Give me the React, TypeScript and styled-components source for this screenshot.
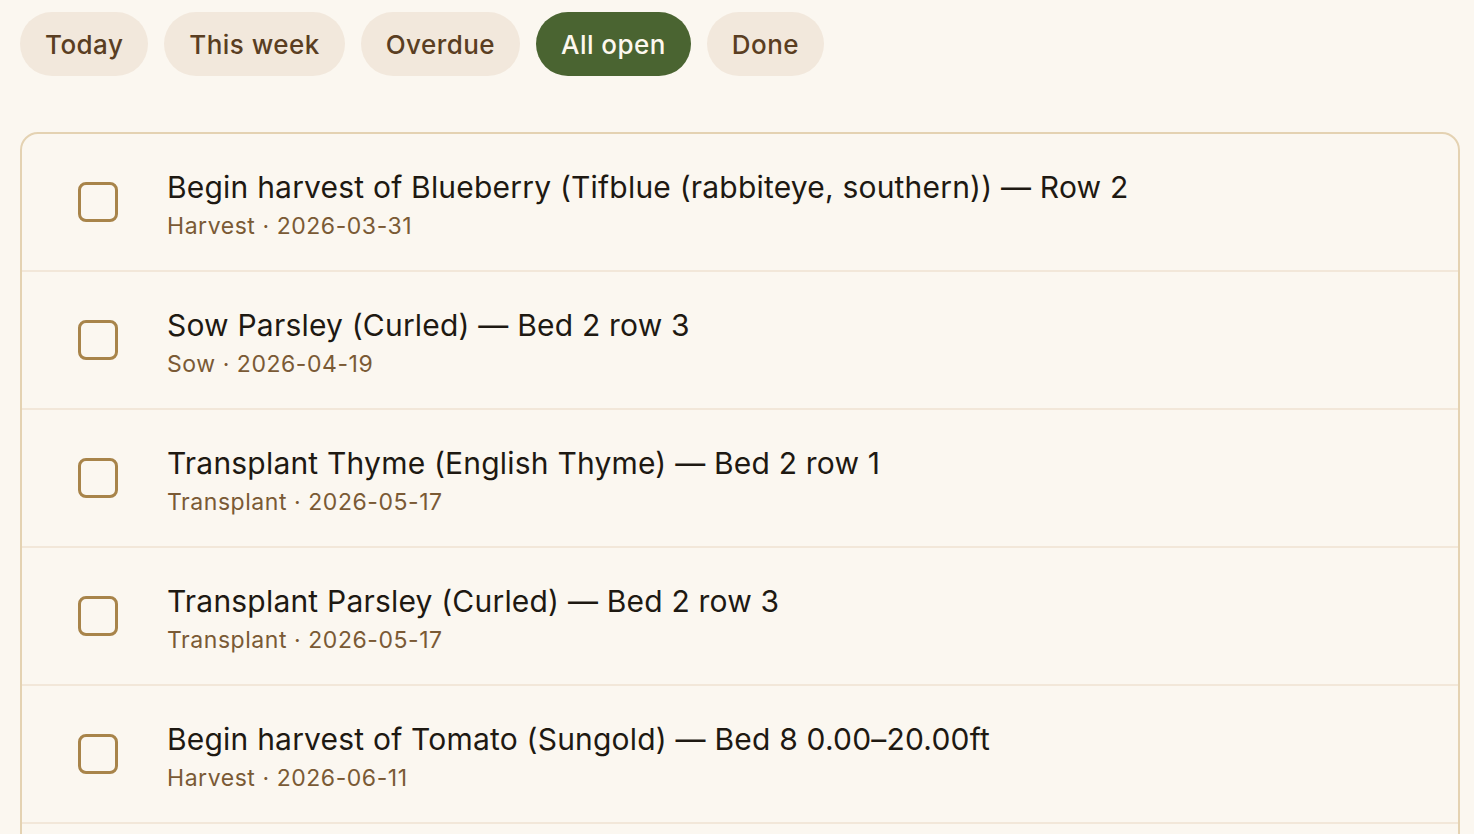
import React from "react";
import styled, { createGlobalStyle } from "styled-components";

const Global = createGlobalStyle`
  html, body { margin: 0; padding: 0; background: #FBF7F0; }
  body { font-family: Inter, "Noto Sans", sans-serif; -webkit-font-smoothing: antialiased; }
`;

const Page = styled.div`
  padding: 12px 14px 0 20px;
  display: flex;
  flex-direction: column;
  gap: 56px;
`;

const ChipBar = styled.div`
  display: flex;
  gap: 16px;
`;

const Chip = styled.button<{ $active?: boolean }>`
  height: 64px;
  padding: 0 25px;
  border: none;
  border-radius: 32px;
  font-family: inherit;
  font-size: 26px;
  letter-spacing: 0.45px;
  font-weight: 500;
  background: ${(p) => (p.$active ? "#4A6431" : "#F2E8DC")};
  color: ${(p) => (p.$active ? "#FDF8EE" : "#5A3E22")};
  cursor: pointer;
`;

const Card = styled.div`
  border: 2px solid #E4D2B2;
  border-radius: 18px;
  background: #FBF7F0;
  overflow: hidden;
`;

const Row = styled.div`
  height: 136px;
  display: flex;
  align-items: center;
  padding-left: 56px;
  gap: 49px;
  border-bottom: 2px solid #F2E7D9;
`;

const Check = styled.span`
  width: 40px;
  height: 40px;
  box-sizing: border-box;
  border: 3px solid #A8844A;
  border-radius: 8px;
  flex-shrink: 0;
`;

const Texts = styled.div`
  display: flex;
  flex-direction: column;
  gap: 5px;
  padding-top: 5px;
`;

const Title = styled.div`
  font-size: 30px;
  letter-spacing: 0.2px;
  line-height: 38px;
  color: #1E1912;
`;

const Meta = styled.div`
  font-size: 23px;
  letter-spacing: 0.55px;
  line-height: 30px;
  color: #7A5A35;
`;

const chips = ["Today", "This week", "Overdue", "All open", "Done"];

const tasks = [
  { title: "Begin harvest of Blueberry (Tifblue (rabbiteye, southern)) — Row 2", kind: "Harvest", date: "2026-03-31" },
  { title: "Sow Parsley (Curled) — Bed 2 row 3", kind: "Sow", date: "2026-04-19" },
  { title: "Transplant Thyme (English Thyme) — Bed 2 row 1", kind: "Transplant", date: "2026-05-17" },
  { title: "Transplant Parsley (Curled) — Bed 2 row 3", kind: "Transplant", date: "2026-05-17" },
  { title: "Begin harvest of Tomato (Sungold) — Bed 8 0.00–20.00ft", kind: "Harvest", date: "2026-06-11" },
  { title: "Begin harvest of Parsley (Curled) — Bed 2 row 3", kind: "Harvest", date: "2026-06-18" },
];

export default function App() {
  return (
    <>
      <Global />
      <Page>
        <ChipBar>
          {chips.map((c) => (
            <Chip key={c} $active={c === "All open"}>{c}</Chip>
          ))}
        </ChipBar>
        <Card>
          {tasks.map((t, i) => (
            <Row key={i}>
              <Check />
              <Texts>
                <Title>{t.title}</Title>
                <Meta>{t.kind} · {t.date}</Meta>
              </Texts>
            </Row>
          ))}
        </Card>
      </Page>
    </>
  );
}
